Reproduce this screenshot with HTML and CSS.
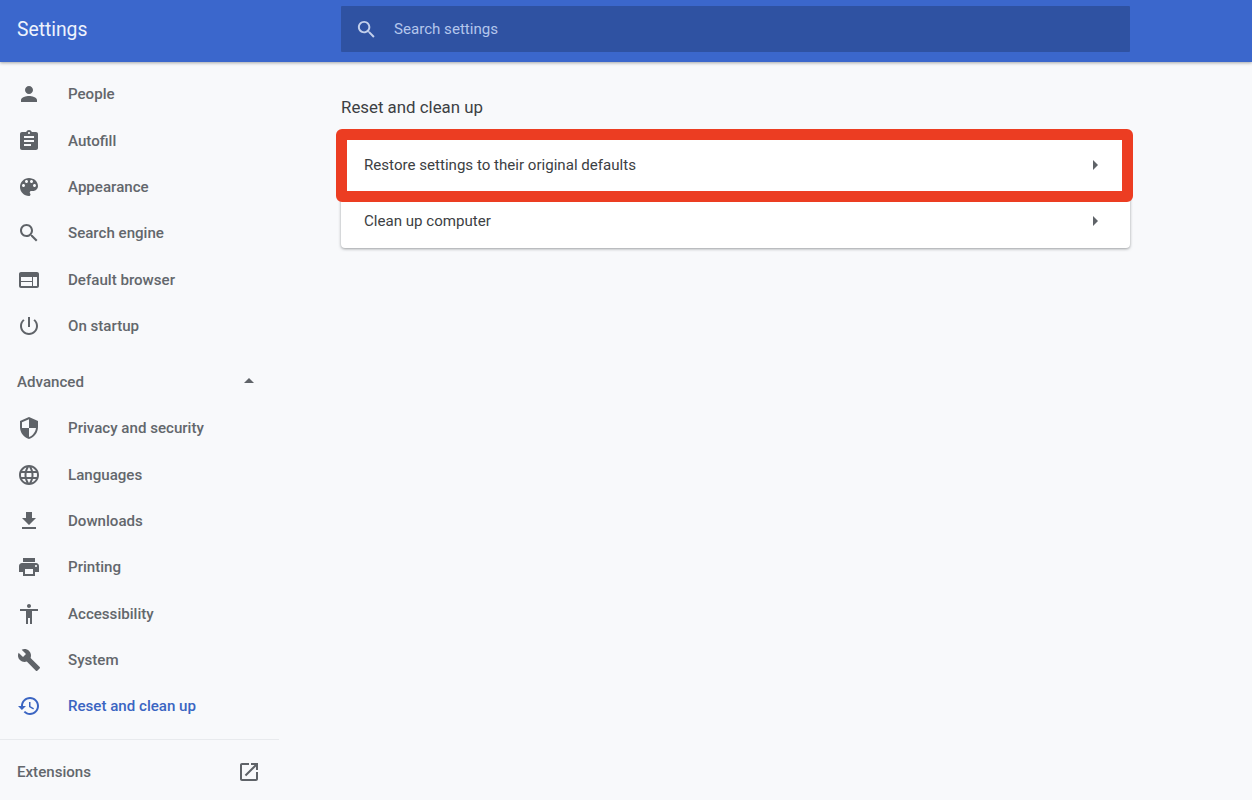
FILE: index.html
```html
<!DOCTYPE html>
<html lang="en">
<head>
<meta charset="utf-8">
<title>Settings</title>
<link rel="stylesheet" href="styles.css">
</head>
<body>
<header class="topbar">
  <div class="brand">Settings</div>
  <div class="search">
    <svg class="search-icon" viewBox="0 0 24 24"><path d="M15.5 14h-.79l-.28-.27C15.41 12.59 16 11.11 16 9.5 16 5.91 13.09 3 9.5 3S3 5.91 3 9.5 5.91 16 9.5 16c1.61 0 3.09-.59 4.23-1.57l.27.28v.79l5 4.99L20.49 19l-4.99-5zm-6 0C7.01 14 5 11.99 5 9.5S7.01 5 9.5 5 14 7.01 14 9.5 11.99 14 9.5 14z"/></svg>
    <span class="search-text">Search settings</span>
  </div>
</header>
<div class="layout">
  <nav class="sidebar">
    <a class="item"><svg class="icon" viewBox="0 0 24 24"><path d="M12 12c2.21 0 4-1.79 4-4s-1.79-4-4-4-4 1.79-4 4 1.79 4 4 4zm0 2c-2.67 0-8 1.34-8 4v2h16v-2c0-2.66-5.33-4-8-4z"/></svg>People</a>
    <a class="item"><svg class="icon" viewBox="0 0 24 24"><path d="M19 3h-4.18C14.4 1.84 13.3 1 12 1c-1.3 0-2.4.84-2.82 2H5c-1.1 0-2 .9-2 2v14c0 1.1.9 2 2 2h14c1.1 0 2-.9 2-2V5c0-1.1-.9-2-2-2zm-7 0c.55 0 1 .45 1 1s-.45 1-1 1-1-.45-1-1 .45-1 1-1zm2 14H7v-2h7v2zm3-4H7v-2h10v2zm0-4H7V7h10v2z"/></svg>Autofill</a>
    <a class="item"><svg class="icon" viewBox="0 0 24 24"><path d="M12 3c-4.97 0-9 4.03-9 9s4.03 9 9 9c.83 0 1.5-.67 1.5-1.5 0-.39-.15-.74-.39-1.01-.23-.26-.38-.61-.38-.99 0-.83.67-1.5 1.5-1.5H16c2.76 0 5-2.24 5-5 0-4.42-4.03-8-9-8zm-5.5 9c-.83 0-1.5-.67-1.5-1.5S5.67 9 6.5 9 8 9.67 8 10.5 7.33 12 6.5 12zm3-4C8.67 8 8 7.33 8 6.5S8.67 5 9.5 5s1.5.67 1.5 1.5S10.33 8 9.5 8zm5 0c-.83 0-1.5-.67-1.5-1.5S13.67 5 14.5 5s1.5.67 1.5 1.5S15.33 8 14.5 8zm3 4c-.83 0-1.5-.67-1.5-1.5S16.67 9 17.5 9s1.5.67 1.5 1.5-.67 1.5-1.5 1.5z"/></svg>Appearance</a>
    <a class="item"><svg class="icon" viewBox="0 0 24 24"><path d="M15.5 14h-.79l-.28-.27C15.41 12.59 16 11.11 16 9.5 16 5.91 13.09 3 9.5 3S3 5.91 3 9.5 5.91 16 9.5 16c1.61 0 3.09-.59 4.23-1.57l.27.28v.79l5 4.99L20.49 19l-4.99-5zm-6 0C7.01 14 5 11.99 5 9.5S7.01 5 9.5 5 14 7.01 14 9.5 11.99 14 9.5 14z"/></svg>Search engine</a>
    <a class="item"><svg class="icon" viewBox="0 0 24 24"><path d="M20 4H4c-1.1 0-1.99.9-1.99 2L2 18c0 1.1.9 2 2 2h16c1.1 0 2-.9 2-2V6c0-1.1-.9-2-2-2zm-5 14H4v-4h11v4zm0-5H4V9h11v4zm5 5h-4V9h4v9z"/></svg>Default browser</a>
    <a class="item"><svg class="icon" viewBox="0 0 24 24"><path d="M13 3h-2v10h2V3zm4.83 2.17l-1.42 1.42C17.99 7.86 19 9.81 19 12c0 3.87-3.13 7-7 7s-7-3.13-7-7c0-2.19 1.01-4.14 2.58-5.42L6.17 5.17C4.23 6.82 3 9.26 3 12c0 4.97 4.03 9 9 9s9-4.03 9-9c0-2.74-1.23-5.18-3.17-6.83z"/></svg>On startup</a>
    <div class="section">
      <span>Advanced</span>
      <svg class="caret" viewBox="0 0 24 24"><path d="M7 14l5-5 5 5z"/></svg>
    </div>
    <a class="item"><svg class="icon" viewBox="0 0 24 24"><path d="M12 1L3 5v6c0 5.55 3.84 10.74 9 12 5.16-1.26 9-6.45 9-12V5l-9-4zm0 10.99h7c-.53 4.12-3.28 7.79-7 8.94V12H5V6.3l7-3.11v8.8z"/></svg>Privacy and security</a>
    <a class="item"><svg class="icon" viewBox="0 0 24 24"><path d="M11.99 2C6.47 2 2 6.48 2 12s4.47 10 9.99 10C17.52 22 22 17.52 22 12S17.52 2 11.99 2zm6.93 6h-2.95c-.32-1.25-.78-2.45-1.38-3.56 1.84.63 3.37 1.91 4.33 3.56zM12 4.04c.83 1.2 1.48 2.53 1.91 3.96h-3.82c.43-1.43 1.08-2.76 1.91-3.96zM4.26 14C4.1 13.36 4 12.69 4 12s.1-1.36.26-2h3.38c-.08.66-.14 1.32-.14 2 0 .68.06 1.34.14 2H4.26zm.82 2h2.95c.32 1.25.78 2.45 1.38 3.56-1.84-.63-3.37-1.9-4.33-3.56zm2.95-8H5.08c.96-1.66 2.49-2.93 4.33-3.56C8.81 5.55 8.35 6.75 8.03 8zM12 19.96c-.83-1.2-1.48-2.53-1.91-3.96h3.82c-.43 1.43-1.08 2.76-1.91 3.96zM14.34 14H9.66c-.09-.66-.16-1.32-.16-2 0-.68.07-1.35.16-2h4.68c.09.65.16 1.32.16 2 0 .68-.07 1.34-.16 2zm.25 5.56c.6-1.11 1.06-2.31 1.38-3.56h2.95c-.96 1.65-2.49 2.93-4.33 3.56zM16.36 14c.08-.66.14-1.32.14-2 0-.68-.06-1.34-.14-2h3.38c.16.64.26 1.31.26 2s-.1 1.36-.26 2h-3.38z"/></svg>Languages</a>
    <a class="item"><svg class="icon" viewBox="0 0 24 24"><path d="M19 9h-4V3H9v6H5l7 7 7-7zM5 18v2h14v-2H5z"/></svg>Downloads</a>
    <a class="item"><svg class="icon" viewBox="0 0 24 24"><path d="M19 8H5c-1.66 0-3 1.34-3 3v6h4v4h12v-4h4v-6c0-1.66-1.34-3-3-3zm-3 11H8v-5h8v5zm3-7c-.55 0-1-.45-1-1s.45-1 1-1 1 .45 1 1-.45 1-1 1zm-1-9H6v4h12V3z"/></svg>Printing</a>
    <a class="item"><svg class="icon" viewBox="0 0 24 24"><path d="M12 2c1.1 0 2 .9 2 2s-.9 2-2 2-2-.9-2-2 .9-2 2-2zm9 7h-6v13h-2v-6h-2v6H9V9H3V7h18v2z"/></svg>Accessibility</a>
    <a class="item"><svg class="icon" viewBox="0 0 24 24"><path d="M22.7 19l-9.1-9.1c.9-2.3.4-5-1.5-6.9-2-2-5-2.4-7.4-1.3L9 6 6 9 1.6 4.7C.4 7.1.9 10.1 2.9 12.1c1.9 1.9 4.6 2.4 6.9 1.5l9.1 9.1c.4.4 1 .4 1.4 0l2.3-2.3c.5-.4.5-1.1.1-1.4z"/></svg>System</a>
    <a class="item active"><svg class="icon" viewBox="0 0 24 24"><path d="M13 3c-4.97 0-9 4.03-9 9H1l3.89 3.89.07.14L9 12H6c0-3.87 3.13-7 7-7s7 3.13 7 7-3.13 7-7 7c-1.93 0-3.68-.79-4.94-2.06l-1.42 1.42C8.27 19.99 10.51 21 13 21c4.97 0 9-4.03 9-9s-4.03-9-9-9zm-1 5v5l4.28 2.54.72-1.21-3.5-2.08V8H12z"/></svg>Reset and clean up</a>
    <div class="extensions">
      <span>Extensions</span>
      <svg class="icon" viewBox="0 0 24 24"><path d="M19 19H5V5h7V3H5c-1.11 0-2 .9-2 2v14c0 1.1.89 2 2 2h14c1.1 0 2-.9 2-2v-7h-2v7zM14 3v2h3.59l-9.83 9.83 1.41 1.41L19 6.41V10h2V3h-7z"/></svg>
    </div>
  </nav>
  <main class="content">
    <h1 class="title">Reset and clean up</h1>
    <div class="card">
      <div class="row">
        <span>Restore settings to their original defaults</span>
        <svg class="arrow" viewBox="0 0 24 24"><path d="M10 17l5-5-5-5v10z"/></svg>
      </div>
      <div class="row row-last">
        <span>Clean up computer</span>
        <svg class="arrow" viewBox="0 0 24 24"><path d="M10 17l5-5-5-5v10z"/></svg>
      </div>
      <div class="highlight"></div>
    </div>
  </main>
</div>
</body>
</html>
```
FILE: styles.css
```css
* { box-sizing: border-box; }
html, body { height: 100%; }
body {
  margin: 0;
  background: #f8f9fb;
  font-family: Roboto, "Liberation Sans", sans-serif;
  color: #5f6368;
  overflow: hidden;
}
.topbar {
  position: relative;
  z-index: 2;
  height: 62px;
  background: #3b67cc;
  box-shadow: 0 1px 3px rgba(60, 64, 67, 0.45);
  display: flex;
  align-items: center;
  padding-bottom: 4px;
}
.brand {
  width: 341px;
  padding-left: 17px;
  font-size: 19.3px;
  color: #eef3fc;
}
.search {
  width: 789px;
  height: 46px;
  background: #2f52a2;
  border-radius: 1px;
  display: flex;
  align-items: center;
  padding-left: 14px;
}
.search-icon { width: 23px; height: 23px; fill: #c3d0ec; flex: none; }
.search-text { margin-left: 16px; font-size: 15.1px; color: #b4c6ec; }
.layout { display: flex; }
.sidebar { width: 279px; flex: none; padding-top: 9px; }
.item {
  height: 46.4px;
  display: flex;
  align-items: center;
  padding-left: 16.5px;
  font-size: 15.1px;
  font-weight: 500;
  color: #63676c;
}
.icon { width: 24px; height: 24px; fill: #5f6368; flex: none; }
.item .icon { margin-right: 27.5px; }
.item.active { color: #3b65c2; }
.item.active .icon { fill: #3b65c2; }
.section {
  height: 55.6px;
  padding: 9px 16px 0 17px;
  display: flex;
  align-items: center;
  justify-content: space-between;
  font-size: 15.1px;
  font-weight: 500;
  color: #63676c;
}
.caret { width: 24px; height: 24px; fill: #5f6368; margin-top: -2px; margin-right: 2px; }
.extensions {
  margin-top: 9px;
  border-top: 1px solid #e8eaed;
  height: 64px;
  padding: 1px 17px 0;
  display: flex;
  align-items: center;
  justify-content: space-between;
  font-size: 15.1px;
  font-weight: 500;
  color: #63676c;
}
.extensions .icon { margin-right: 1px; }
.content { width: 789px; margin-left: 62px; }
.title {
  margin: 32.5px 0 0;
  height: 42.5px;
  font-size: 16.85px;
  line-height: 24px;
  font-weight: 400;
  color: #3c4043;
}
.card {
  position: relative;
  background: #fff;
  border-radius: 4px;
  box-shadow: 0 1px 3px rgba(60, 64, 67, 0.5);
}
.row {
  height: 56px;
  padding: 0 23px;
  display: flex;
  align-items: center;
  justify-content: space-between;
  font-size: 15.1px;
  color: #3c4043;
}
.row-last { height: 55px; padding-bottom: 0; }
.arrow { width: 24px; height: 24px; fill: #5f6368; }
.highlight {
  position: absolute;
  left: -5px;
  right: -3px;
  top: -8px;
  height: 73px;
  border: 11px solid #ec3d22;
  border-radius: 6px;
}
```
